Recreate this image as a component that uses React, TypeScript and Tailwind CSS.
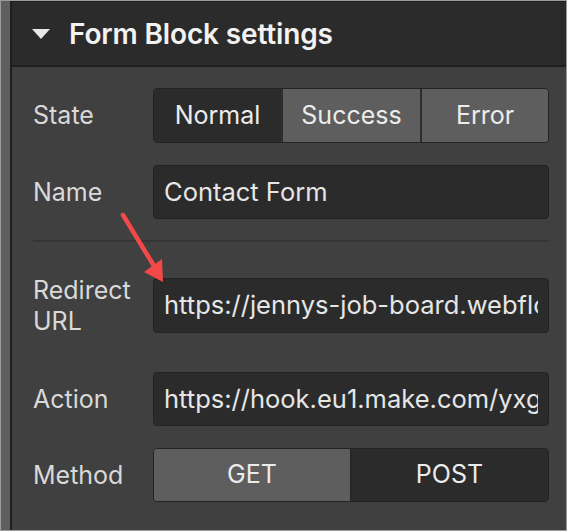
import type { ReactNode } from 'react';

const FONT = { fontFamily: 'Inter, "Noto Sans", sans-serif' };

const LABEL = 'w-[120px] shrink-0 text-[25px] leading-[31px] text-[#d9d9d9]';
const INPUT =
  'flex h-full min-w-0 flex-1 items-center rounded-[4px] border border-[#232323] bg-[#2b2b2b] pl-[10px] pr-[10px] text-[25.5px] text-[#e6e6e6]';

function Row({ label, className, children }: { label: ReactNode; className: string; children: ReactNode }) {
  return (
    <div className={`flex items-center ${className}`}>
      <div className={LABEL}>{label}</div>
      {children}
    </div>
  );
}

function Field({ value }: { value: string }) {
  return (
    <div className={INPUT}>
      <span className="block min-w-0 flex-1 overflow-hidden whitespace-nowrap">{value}</span>
    </div>
  );
}

function Segments({ items, active }: { items: { text: string; w: string }[]; active: number }) {
  return (
    <div className="flex h-full min-w-0 flex-1 overflow-hidden rounded-[4px] border border-[#232323]">
      {items.map((it, i) => (
        <div
          key={it.text}
          className={`flex h-full items-center justify-center text-[25px] text-[#ececec] ${it.w} ${
            i === active ? 'bg-[#2b2b2b]' : 'bg-[#5e5e5e]'
          } ${i > 0 ? 'border-l-2 border-[#2e2e2e]' : ''}`}
        >
          {it.text}
        </div>
      ))}
    </div>
  );
}

export default function App() {
  return (
    <div style={FONT} className="relative flex h-[531px] w-[567px] overflow-hidden border border-[#9c9c9c] bg-[#5e5e5e]">
      <div className="w-[9px] shrink-0 bg-[#5e5e5e]" />
      <div className="flex min-w-0 flex-1 flex-col border-l-2 border-t border-[#1f1f1f]">
        <div className="flex h-[65px] shrink-0 items-center border-b-2 border-[#1f1f1f] bg-[#2b2b2b] pl-[20px]">
          <svg width="18" height="10" viewBox="0 0 18 10" className="mr-[19px]">
            <path d="M0 0 L18 0 L9 10 Z" fill="#e8e8e8" />
          </svg>
          <span className="text-[28px] font-semibold tracking-[-0.15px] text-[#f2f2f2]">Form Block settings</span>
        </div>
        <div className="flex min-w-0 flex-1 flex-col bg-[#404040] pl-[21px] pr-[17px] pt-[21px]">
          <Row label="State" className="h-[55px]">
            <Segments
              active={0}
              items={[
                { text: 'Normal', w: 'w-[127px]' },
                { text: 'Success', w: 'w-[139px]' },
                { text: 'Error', w: 'flex-1' },
              ]}
            />
          </Row>
          <Row label="Name" className="mt-[22px] h-[54px]">
            <Field value="Contact Form" />
          </Row>
          <div className="mt-[21px] h-[2px] bg-[#353535]" />
          <Row
            label={
              <>
                Redirect
                <br />
                URL
              </>
            }
            className="mt-[36px] h-[55px]"
          >
            <Field value="https://jennys-job-board.webflow.io/thank-you" />
          </Row>
          <Row label="Action" className="mt-[39px] h-[54px]">
            <Field value="https://hook.eu1.make.com/yxgq8s2kdf" />
          </Row>
          <Row label="Method" className="mt-[22px] h-[54px]">
            <div className="flex h-full min-w-0 flex-1 overflow-hidden rounded-[4px] border border-[#232323]">
              <div className="flex w-[196px] items-center justify-center bg-[#5e5e5e] text-[25px] text-[#ececec]">GET</div>
              <div className="flex flex-1 items-center justify-center border-l border-[#232323] bg-[#2b2b2b] text-[25px] text-[#ececec]">
                POST
              </div>
            </div>
          </Row>
        </div>
      </div>
      <svg className="pointer-events-none absolute left-0 top-0" width="567" height="531" viewBox="0 0 567 531">
        <line x1="122" y1="214" x2="153" y2="265" stroke="#f24848" strokeWidth="4.5" strokeLinecap="round" />
        <path d="M143 271 L161 258 L162 281 Z" fill="#f24848" />
      </svg>
    </div>
  );
}
